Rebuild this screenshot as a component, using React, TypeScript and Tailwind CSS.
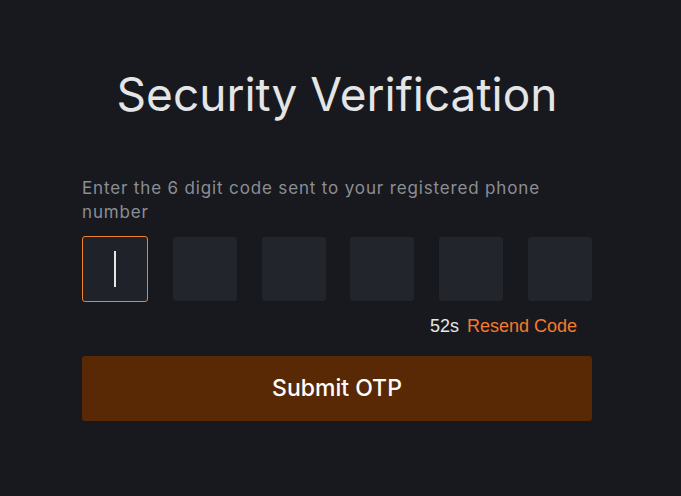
import { useState } from 'react'

export default function App() {
  const [digits] = useState(['', '', '', '', '', ''])

  return (
    <div className="min-h-screen w-full bg-[#18191e]">
      <div className="w-[510px] ml-[82px] pt-[64px] flex flex-col">
        <h1 className="text-center text-[46px] leading-[60px] text-[#e4e5e7] font-['Inter',sans-serif] font-normal">
          Security Verification
        </h1>
        <p className="mt-[52px] text-[17px] leading-[24px] tracking-[0.85px] text-[#8b8e95] font-['Inter',sans-serif]">
          Enter the 6 digit code sent to your registered phone number
        </p>
        <div className="mt-[12px] flex justify-between">
          {digits.map((d, i) => (
            <div
              key={i}
              className={
                i === 0
                  ? 'w-[66px] h-[66px] rounded-[3px] border border-[#f0812f] bg-[#202229] flex items-center justify-center'
                  : 'w-[64px] h-[64px] mt-px rounded-[3px] bg-[#22252c] flex items-center justify-center'
              }
            >
              {i === 0 ? <span className="block w-[2px] h-[36px] bg-[#e6e6e6]" /> : d}
            </div>
          ))}
        </div>
        <div className="mt-[12px] pr-[15px] flex justify-end gap-[8px] text-[18px] leading-[24px] font-['Liberation_Sans',Arial,sans-serif]">
          <span className="text-[#e6e8ea]">52s</span>
          <button type="button" className="text-[#f77a2e]">
            Resend Code
          </button>
        </div>
        <button
          type="button"
          className="mt-[18px] h-[65px] w-full rounded-[3px] bg-[#592906] text-white text-[23px] font-medium font-['Inter',sans-serif]"
        >
          Submit OTP
        </button>
      </div>
    </div>
  )
}
